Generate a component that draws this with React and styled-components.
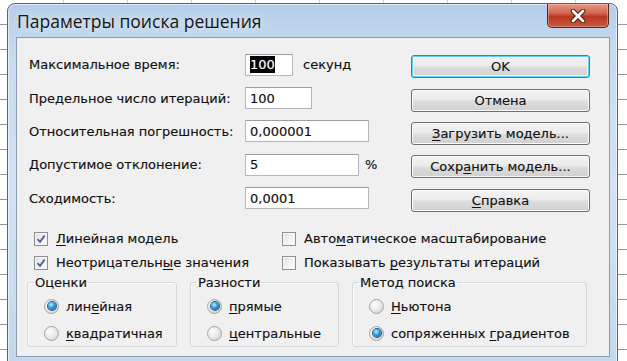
import React from "react";
import styled, { createGlobalStyle } from "styled-components";

const GlobalStyle = createGlobalStyle`
  html, body {
    margin: 0;
    padding: 0;
  }
  body {
    font-family: "DejaVu Sans", "Noto Sans", sans-serif;
    color: #111;
  }
`;

// spreadsheet that shows around the dialog
const Sheet = styled.div`
  width: 627px;
  height: 361px;
  overflow: hidden;
  box-sizing: border-box;
  padding: 3px 9px 0 7px;
  background-color: #fff;
  background-image:
    repeating-linear-gradient(to bottom, transparent 0 24px, #8f98a3 24px 25px),
    repeating-linear-gradient(to right, transparent 0 63px, #c9d0da 63px 64px);
`;

const Window = styled.div`
  box-sizing: border-box;
  width: 611px;
  height: 360px;
  display: flex;
  flex-direction: column;
  border: 1px solid #56657a;
  border-radius: 8px 8px 0 0;
  background: linear-gradient(
    to bottom,
    #b4cde8 0%,
    #c6daf0 12%,
    #d3e3f5 50%,
    #c3d8ee 100%
  );
  box-shadow: inset 0 0 0 1px rgba(255, 255, 255, 0.55);
`;

const TitleBar = styled.div`
  height: 33px;
  display: flex;
  align-items: flex-start;
  justify-content: space-between;
  flex-shrink: 0;
`;

const Title = styled.div`
  font-family: "Open Sans", "Noto Sans", sans-serif;
  font-size: 17.5px;
  color: #151515;
  padding: 5px 0 0 9px;
  text-shadow: 0 0 8px rgba(255, 255, 255, 0.9);
`;

const CloseButton = styled.div`
  width: 62px;
  height: 24px;
  margin-right: 8px;
  display: flex;
  align-items: center;
  justify-content: center;
  box-sizing: border-box;
  border: 1px solid #5e2219;
  border-top: none;
  border-radius: 0 0 5px 5px;
  background: linear-gradient(
    to bottom,
    #e49a88 0%,
    #d46650 40%,
    #bb3520 55%,
    #c95a40 100%
  );
  box-shadow: inset 0 0 0 1px rgba(255, 210, 200, 0.4);
`;

const Client = styled.div`
  flex: 1;
  margin: 0 7px 5px 8px;
  border: 1px solid #8c9db2;
  background: #f0f0f0;
  padding: 10px 19px 0 12px;
  font-size: 13px;
  -webkit-text-stroke: 0.15px #111;
`;

const TopArea = styled.div`
  display: flex;
  justify-content: space-between;
`;

const Fields = styled.div`
  display: grid;
  grid-template-columns: 216px auto;
  grid-auto-rows: 33.4px;
  align-items: center;
`;

const FieldValue = styled.div`
  display: flex;
  align-items: center;
`;

const TextBox = styled.div`
  box-sizing: border-box;
  width: ${(p) => p.$width}px;
  height: 22px;
  padding: 0 4px;
  display: flex;
  align-items: center;
  background: #fff;
  border: 1px solid #b4b7bd;
  border-top-color: #9a9ea6;
`;

const Selected = styled.span`
  background: #000;
  color: #fff;
  -webkit-text-stroke: 0.15px #fff;
  padding: 1px 0;
`;

const Unit = styled.span`
  margin-left: ${(p) => p.$gap}px;
`;

const Buttons = styled.div`
  width: 179px;
  margin-top: 2px;
  display: grid;
  grid-auto-rows: 33.4px;
  align-items: center;
`;

const Button = styled.div`
  box-sizing: border-box;
  height: 23px;
  display: flex;
  align-items: center;
  justify-content: center;
  border: 1px solid ${(p) => (p.$default ? "#3c7fb1" : "#707070")};
  border-radius: 3px;
  background: linear-gradient(
    to bottom,
    #f3f3f3 0%,
    #ebebeb 48%,
    #dddddd 52%,
    #d0d0d0 100%
  );
  box-shadow: ${(p) =>
    p.$default
      ? "inset 0 0 0 1px #5fd3f5, inset 0 0 0 2px #e9f8fd"
      : "inset 0 0 0 1px #fbfbfb"};
  color: #111;
`;

const Key = styled.span`
  text-decoration: underline;
  text-underline-offset: 2px;
`;

const Options = styled.div`
  margin-top: 10px;
  padding-left: 5px;
  display: grid;
  grid-template-columns: 248px 1fr;
  grid-auto-rows: 24px;
  align-items: center;
`;

const Check = styled.div`
  display: flex;
  align-items: center;
  gap: 8px;
`;

const Box = styled.span`
  box-sizing: border-box;
  width: 14px;
  height: 14px;
  display: flex;
  align-items: center;
  justify-content: center;
  border: 1px solid #8e8f8f;
  background: linear-gradient(135deg, #dcdcdc 0%, #f4f4f4 60%, #ffffff 100%);
  box-shadow: inset 0 0 0 1px #f6f6f6;
`;

const Groups = styled.div`
  display: flex;
  gap: 13px;
  margin-left: -2px;
`;

const Group = styled.fieldset`
  box-sizing: border-box;
  width: ${(p) => p.$width}px;
  height: 72px;
  margin: 0;
  padding: 0 0 0 6px;
  border: 1px solid #d3d8dd;
  border-radius: 3px;
  box-shadow: inset 1px 1px 0 #fbfbfb;
`;

const Legend = styled.legend`
  padding: 0 1px;
`;

const RadioRow = styled.div`
  height: 27px;
  margin-left: 10px;
  display: flex;
  align-items: center;
  gap: 7px;
  &:first-of-type {
    margin-top: 3px;
  }
`;

const RadioCircle = styled.span`
  box-sizing: border-box;
  width: 15px;
  height: 15px;
  border-radius: 50%;
  display: flex;
  align-items: center;
  justify-content: center;
  border: 1px solid #a3a3a3;
  background: radial-gradient(circle at 35% 35%, #ffffff 0%, #e6e6e6 55%, #c9c9c9 100%);
`;

const RadioDot = styled.span`
  width: 8px;
  height: 8px;
  border-radius: 50%;
  background: radial-gradient(circle at 40% 35%, #c4f0ff 0%, #3aa2e0 40%, #0b4a8a 100%);
  box-shadow: 0 0 0 1px #25588c;
`;

const CheckMark = () => (
  <svg width="10" height="10" viewBox="0 0 10 10">
    <path
      d="M1.5 5.2 L4 7.8 L8.6 1.6"
      fill="none"
      stroke="#4b61a0"
      strokeWidth="1.8"
    />
  </svg>
);

const CheckBox = ({ checked, children }) => (
  <Check>
    <Box>{checked && <CheckMark />}</Box>
    <span>{children}</span>
  </Check>
);

const Radio = ({ checked, children }) => (
  <RadioRow>
    <RadioCircle>{checked && <RadioDot />}</RadioCircle>
    <span>{children}</span>
  </RadioRow>
);

const CloseGlyph = () => (
  <svg width="16" height="14" viewBox="0 0 16 14">
    <path
      d="M3 2 L13 12 M13 2 L3 12"
      stroke="#55180f"
      strokeWidth="4.6"
      strokeLinecap="round"
    />
    <path
      d="M3 2 L13 12 M13 2 L3 12"
      stroke="#ffffff"
      strokeWidth="2.8"
      strokeLinecap="round"
    />
  </svg>
);

const fields = [
  { label: "Максимальное время:", value: "100", width: 48, selected: true, unit: "секунд", gap: 10 },
  { label: "Предельное число итераций:", value: "100", width: 67 },
  { label: "Относительная погрешность:", value: "0,000001", width: 124 },
  { label: "Допустимое отклонение:", value: "5", width: 114, unit: "%", gap: 6 },
  { label: "Сходимость:", value: "0,0001", width: 124 },
];

export default function App() {
  return (
    <>
      <GlobalStyle />
      <Sheet>
        <Window>
          <TitleBar>
            <Title>Параметры поиска решения</Title>
            <CloseButton>
              <CloseGlyph />
            </CloseButton>
          </TitleBar>
          <Client>
            <TopArea>
              <Fields>
                {fields.map((f) => (
                  <React.Fragment key={f.label}>
                    <span>{f.label}</span>
                    <FieldValue>
                      <TextBox $width={f.width}>
                        {f.selected ? <Selected>{f.value}</Selected> : f.value}
                      </TextBox>
                      {f.unit && <Unit $gap={f.gap}>{f.unit}</Unit>}
                    </FieldValue>
                  </React.Fragment>
                ))}
              </Fields>
              <Buttons>
                <Button $default>OK</Button>
                <Button>Отмена</Button>
                <Button>
                  <span>
                    <Key>З</Key>агрузить модель...
                  </span>
                </Button>
                <Button>
                  <span>
                    Сохр<Key>а</Key>нить модель...
                  </span>
                </Button>
                <Button>
                  <span>
                    <Key>С</Key>правка
                  </span>
                </Button>
              </Buttons>
            </TopArea>
            <Options>
              <CheckBox checked>
                <Key>Л</Key>инейная модель
              </CheckBox>
              <CheckBox>
                Авто<Key>м</Key>атическое масштабирование
              </CheckBox>
              <CheckBox checked>
                Неотрицательн<Key>ы</Key>е значения
              </CheckBox>
              <CheckBox>
                Показывать <Key>р</Key>езультаты итераций
              </CheckBox>
            </Options>
            <Groups>
              <Group $width={150}>
                <Legend>Оценки</Legend>
                <Radio checked>
                  лин<Key>е</Key>йная
                </Radio>
                <Radio>
                  <Key>к</Key>вадратичная
                </Radio>
              </Group>
              <Group $width={149}>
                <Legend>Разности</Legend>
                <Radio checked>
                  <Key>п</Key>рямые
                </Radio>
                <Radio>
                  <Key>ц</Key>ентральные
                </Radio>
              </Group>
              <Group $width={235}>
                <Legend>Метод поиска</Legend>
                <Radio>
                  <Key>Н</Key>ьютона
                </Radio>
                <Radio checked>
                  сопряженных <Key>г</Key>радиентов
                </Radio>
              </Group>
            </Groups>
          </Client>
        </Window>
      </Sheet>
    </>
  );
}
